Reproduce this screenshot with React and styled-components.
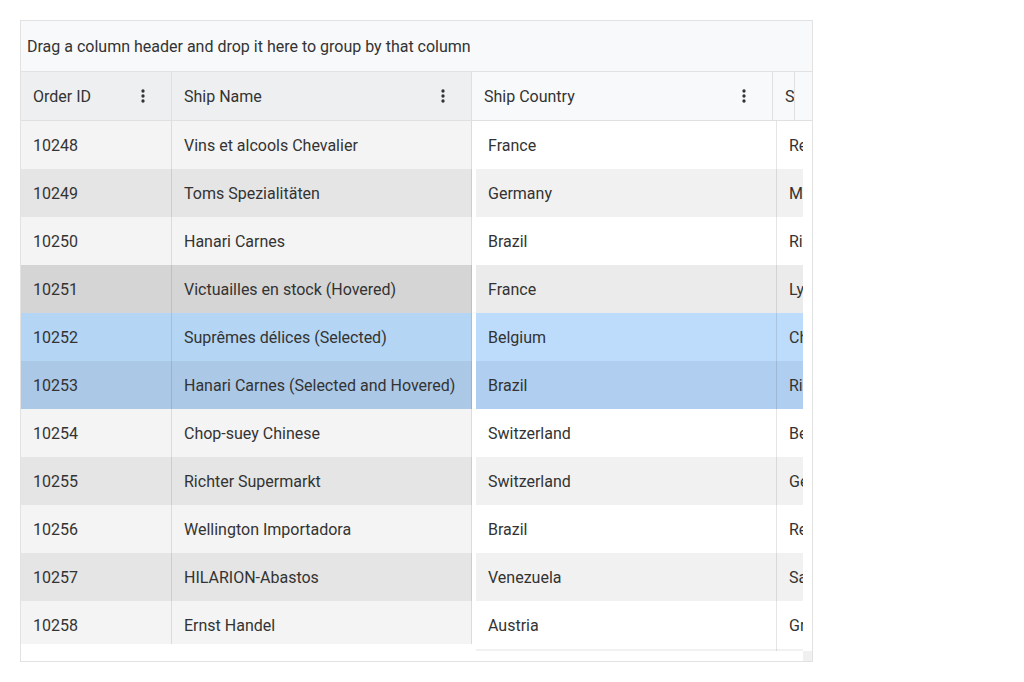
import React from "react";
import styled, { createGlobalStyle } from "styled-components";

const Global = createGlobalStyle`
  html, body { margin: 0; padding: 0; background: #fff; }
  body { font-family: Roboto, "Noto Sans", sans-serif; color: #333; }
  * { box-sizing: border-box; }
`;

const Page = styled.div`
  padding: 20px;
`;

const Grid = styled.div`
  width: 793px;
  height: 642px;
  border: 1px solid #e2e2e2;
  display: flex;
  flex-direction: column;
  font-size: 16px;
  background: #fff;
  overflow: hidden;
`;

const GroupArea = styled.div`
  height: 51px;
  flex: none;
  display: flex;
  align-items: center;
  padding-left: 6px;
  background: #f8f9fa;
  border-bottom: 1px solid #e2e2e2;
  color: #333;
`;

const HeaderRow = styled.div`
  height: 49px;
  flex: none;
  display: flex;
  overflow: hidden;
  border-bottom: 1px solid #e0e0e0;
  background: #f8f9fa;
`;

const HeaderCell = styled.div`
  width: ${(p) => p.$w}px;
  flex: none;
  display: flex;
  align-items: center;
  justify-content: space-between;
  padding: 0 ${(p) => (p.$narrow ? 0 : 18)}px 0 ${(p) => (p.$narrow ? 12 : 12)}px;
  background: ${(p) => (p.$pinned ? "#eeeff1" : "#f8f9fa")};
  border-right: ${(p) => (p.$noBorder ? "none" : "1px solid #e0e0e0")};
  overflow: hidden;
  white-space: nowrap;
  color: #333;
`;

const Kebab = styled.svg`
  width: 20px;
  height: 20px;
  flex: none;
  fill: #333;
`;

const Body = styled.div`
  height: 530px;
  flex: none;
  display: flex;
`;

const PinnedArea = styled.div`
  width: 451px;
  height: 523px;
  flex: none;
  overflow: hidden;
`;

const Gap = styled.div`
  width: 4px;
  flex: none;
`;

const ScrollArea = styled.div`
  width: 327px;
  flex: none;
  overflow: hidden;
`;

const VScroll = styled.div`
  width: 9px;
  flex: none;
  background: #fff;
`;

const Row = styled.div`
  display: flex;
  height: ${(p) => (p.$partial ? 2 : 48)}px;
  background: ${(p) => p.$bg};
`;

const Cell = styled.div`
  width: ${(p) => p.$w}px;
  flex: none;
  display: flex;
  align-items: center;
  padding-left: 12px;
  white-space: nowrap;
  overflow: hidden;
  color: #333;
  border-right: ${(p) => (p.$border ? "1px solid rgba(0,0,0,0.1)" : "none")};
`;

const BottomBar = styled.div`
  height: 10px;
  flex: none;
  display: flex;
  justify-content: flex-end;
`;

const Corner = styled.div`
  width: 9px;
  height: 10px;
  background: #f0f0f0;
`;

const rows = [
  ["10248", "Vins et alcools Chevalier", "France", "Reims"],
  ["10249", "Toms Spezialitäten", "Germany", "Münster"],
  ["10250", "Hanari Carnes", "Brazil", "Rio de Janeiro"],
  ["10251", "Victuailles en stock (Hovered)", "France", "Lyon", "hover"],
  ["10252", "Suprêmes délices (Selected)", "Belgium", "Charleroi", "sel"],
  ["10253", "Hanari Carnes (Selected and Hovered)", "Brazil", "Rio de Janeiro", "selhover"],
  ["10254", "Chop-suey Chinese", "Switzerland", "Bern"],
  ["10255", "Richter Supermarkt", "Switzerland", "Genève"],
  ["10256", "Wellington Importadora", "Brazil", "Resende"],
  ["10257", "HILARION-Abastos", "Venezuela", "San Cristóbal"],
  ["10258", "Ernst Handel", "Austria", "Graz"],
];

const pinnedBg = (state, i) => {
  if (state === "hover") return "#d5d5d5";
  if (state === "sel") return "#b4d5f4";
  if (state === "selhover") return "#abc8e6";
  return i % 2 === 0 ? "#f4f4f4" : "#e5e5e5";
};

const scrollBg = (state, i) => {
  if (state === "hover") return "#ebebeb";
  if (state === "sel") return "#bddcfc";
  if (state === "selhover") return "#b0cef0";
  return i % 2 === 0 ? "#ffffff" : "#f1f1f1";
};

const MoreIcon = () => (
  <Kebab viewBox="0 0 24 24">
    <circle cx="12" cy="6" r="2" />
    <circle cx="12" cy="12" r="2" />
    <circle cx="12" cy="18" r="2" />
  </Kebab>
);

export default function App() {
  return (
    <Page>
      <Global />
      <Grid>
        <GroupArea>Drag a column header and drop it here to group by that column</GroupArea>
        <HeaderRow>
          <HeaderCell $w={151} $pinned>
            <span>Order ID</span>
            <MoreIcon />
          </HeaderCell>
          <HeaderCell $w={300} $pinned>
            <span>Ship Name</span>
            <MoreIcon />
          </HeaderCell>
          <HeaderCell $w={301}>
            <span>Ship Country</span>
            <MoreIcon />
          </HeaderCell>
          <HeaderCell $w={22} $narrow>
            <span>Ship City</span>
          </HeaderCell>
          <HeaderCell $w={17} $noBorder />
        </HeaderRow>
        <Body>
          <PinnedArea>
            {rows.map((r, i) => (
              <Row key={r[0]} $bg={pinnedBg(r[4], i)}>
                <Cell $w={151} $border>{r[0]}</Cell>
                <Cell $w={300} $border>{r[1]}</Cell>
              </Row>
            ))}
          </PinnedArea>
          <Gap />
          <ScrollArea>
            {rows.map((r, i) => (
              <Row key={r[0]} $bg={scrollBg(r[4], i)}>
                <Cell $w={301} $border>{r[2]}</Cell>
                <Cell $w={200}>{r[3]}</Cell>
              </Row>
            ))}
            <Row $partial $bg={scrollBg(null, 1)}>
              <Cell $w={301} $border />
              <Cell $w={200} />
            </Row>
          </ScrollArea>
          <VScroll />
        </Body>
        <BottomBar>
          <Corner />
        </BottomBar>
      </Grid>
    </Page>
  );
}
